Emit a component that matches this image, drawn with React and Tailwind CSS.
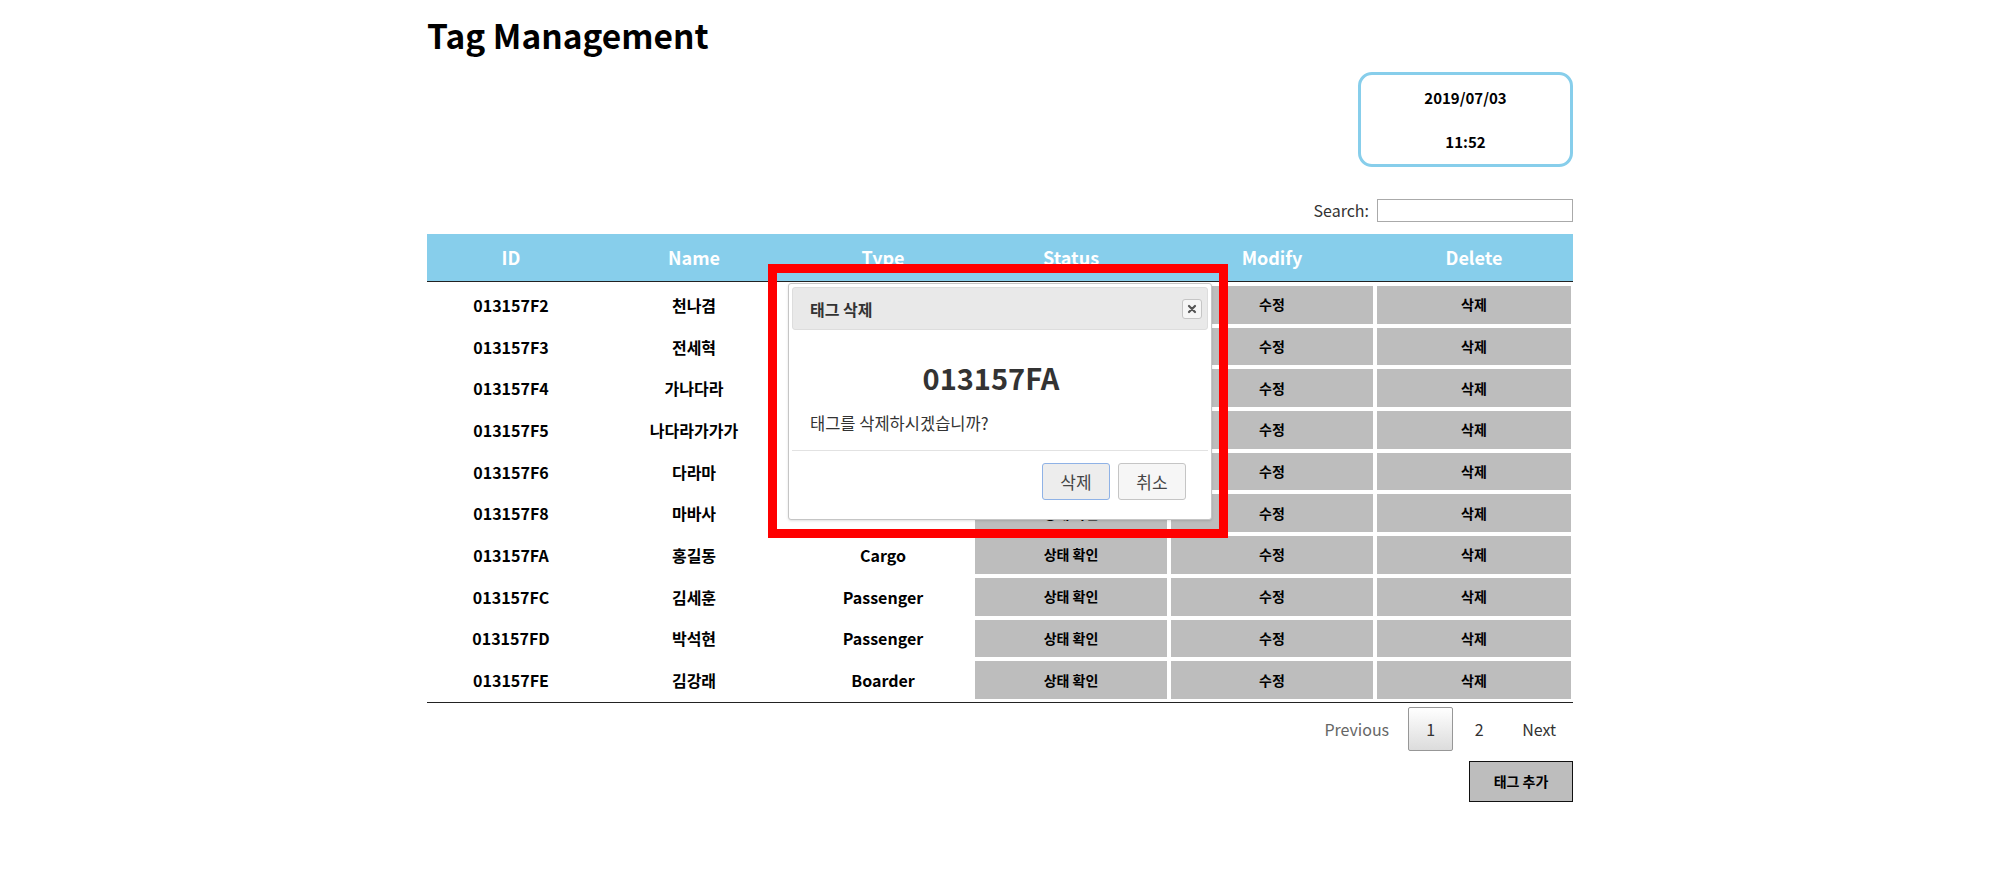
const rows = [
  { id: "013157F2", name: "천나겸", type: "Passenger" },
  { id: "013157F3", name: "전세혁", type: "Passenger" },
  { id: "013157F4", name: "가나다라", type: "Cargo" },
  { id: "013157F5", name: "나다라가가가", type: "Boarder" },
  { id: "013157F6", name: "다라마", type: "Passenger" },
  { id: "013157F8", name: "마바사", type: "Cargo" },
  { id: "013157FA", name: "홍길동", type: "Cargo" },
  { id: "013157FC", name: "김세훈", type: "Passenger" },
  { id: "013157FD", name: "박석현", type: "Passenger" },
  { id: "013157FE", name: "김강래", type: "Boarder" },
];

const cols = "grid grid-cols-[168px_198px_180px_196px_206px_198px]";

function GrayCell({ children }) {
  return (
    <div className="p-[2px] h-full">
      <div className="h-full bg-[#bdbdbd] flex items-center justify-center text-[14px] font-bold text-black">
        {children}
      </div>
    </div>
  );
}

function DeleteDialog() {
  return (
    <>
      {/* dialog */}
      <div className="absolute left-[361px] top-[283px] w-[424px] h-[237px] bg-white border border-[#c5c5c5] rounded-[3px] p-[3px] shadow-sm flex flex-col">
        <div className="h-[43px] bg-[#e9e9e9] border border-[#dddddd] rounded-[3px] flex items-center justify-between pl-[17px] pr-[5px]">
          <span className="text-[16px] font-bold text-[#333]">태그 삭제</span>
          <button className="w-[20px] h-[20px] border border-[#c5c5c5] bg-[#f6f6f6] rounded-[3px] flex items-center justify-center text-[#555]">
            <svg width="10" height="10" viewBox="0 0 10 10">
              <path d="M2 2 L8 8 M8 2 L2 8" stroke="#555" strokeWidth="2.2" strokeLinecap="round" />
            </svg>
          </button>
        </div>
        <div className="flex-1 pl-[18px] pr-[18px] pt-[24px]">
          <div className="text-center text-[29px] font-bold text-[#333] leading-[46px] pr-[18px]">013157FA</div>
          <div className="text-[16.5px] text-[#333] leading-[22px] mt-[12px]">태그를 삭제하시겠습니까?</div>
        </div>
        <div className="border-t border-[#e2e2e2] h-[66px] flex items-start justify-end gap-[8px] pr-[22px] pt-[12px]">
          <button className="w-[68px] h-[37px] border border-[#8fb2e6] bg-[#ededed] rounded-[3px] text-[17px] text-[#454545]">
            삭제
          </button>
          <button className="w-[68px] h-[37px] border border-[#c5c5c5] bg-[#f6f6f6] rounded-[3px] text-[17px] text-[#454545]">
            취소
          </button>
        </div>
      </div>
      {/* red highlight */}
      <div className="absolute left-[341px] top-[264px] w-[460px] h-[274px] border-[9px] border-[#ff0000] pointer-events-none" />
    </>
  );
}

export default function App() {
  return (
    <div className="min-h-[879px] bg-white font-['Noto_Sans_CJK_KR','Noto_Sans',sans-serif] text-black">
      <div className="relative w-[1146px] mx-auto pt-[15px]">
        <h1 className="text-[33.5px] font-bold leading-[40px] text-black">Tag Management</h1>

        <div className="flex justify-end mt-[17px]">
          <div className="w-[215px] h-[95px] border-[3px] border-[#87ceeb] rounded-[14px] pt-[12px] text-center text-[15px] font-bold leading-[22px]">
            <div>2019/07/03</div>
            <div className="mt-[22px]">11:52</div>
          </div>
        </div>

        <div className="flex justify-end items-center gap-[8px] mt-[31px]">
          <label className="text-[16px] text-[#333]">Search:</label>
          <input className="w-[196px] h-[23px] border border-[#aaaaaa] outline-none" />
        </div>

        <div className="mt-[12px]">
          <div className={`${cols} h-[48px] bg-[#87ceeb] border-b border-[#222] text-white text-[18px] font-bold`}>
            {["ID", "Name", "Type", "Status", "Modify", "Delete"].map((h) => (
              <div key={h} className="flex items-center justify-center">
                {h}
              </div>
            ))}
          </div>
          <div className="pt-[2px] pb-[1px] border-b border-[#222]">
            {rows.map((r, i) => (
              <div key={r.id} className={`${cols} h-[41.7px] text-[16px] font-bold`}>
                <div className="flex items-center justify-center">{r.id}</div>
                <div className="flex items-center justify-center">{r.name}</div>
                <div className="flex items-center justify-center">{i < 6 ? "" : r.type}</div>
                <GrayCell>상태 확인</GrayCell>
                <GrayCell>수정</GrayCell>
                <GrayCell>삭제</GrayCell>
              </div>
            ))}
          </div>
        </div>

        <div className="flex justify-end mt-[4px] text-[16px]">
          <span className="h-[44px] px-[17px] flex items-center text-[#666] ml-[2px]">Previous</span>
          <span className="h-[44px] w-[45px] flex items-center justify-center ml-[2px] border border-[#979797] rounded-[2px] bg-gradient-to-b from-white to-[#dcdcdc] text-[#333]">
            1
          </span>
          <span className="h-[44px] w-[48px] flex items-center justify-center ml-[2px] text-[#333]">2</span>
          <span className="h-[44px] px-[17px] flex items-center ml-[2px] text-[#333]">Next</span>
        </div>

        <div className="flex justify-end mt-[10px]">
          <button className="w-[104px] h-[41px] bg-[#bdbdbd] border border-[#111] text-[14px] font-bold text-black">
            태그 추가
          </button>
        </div>

        <DeleteDialog />
      </div>
    </div>
  );
}
